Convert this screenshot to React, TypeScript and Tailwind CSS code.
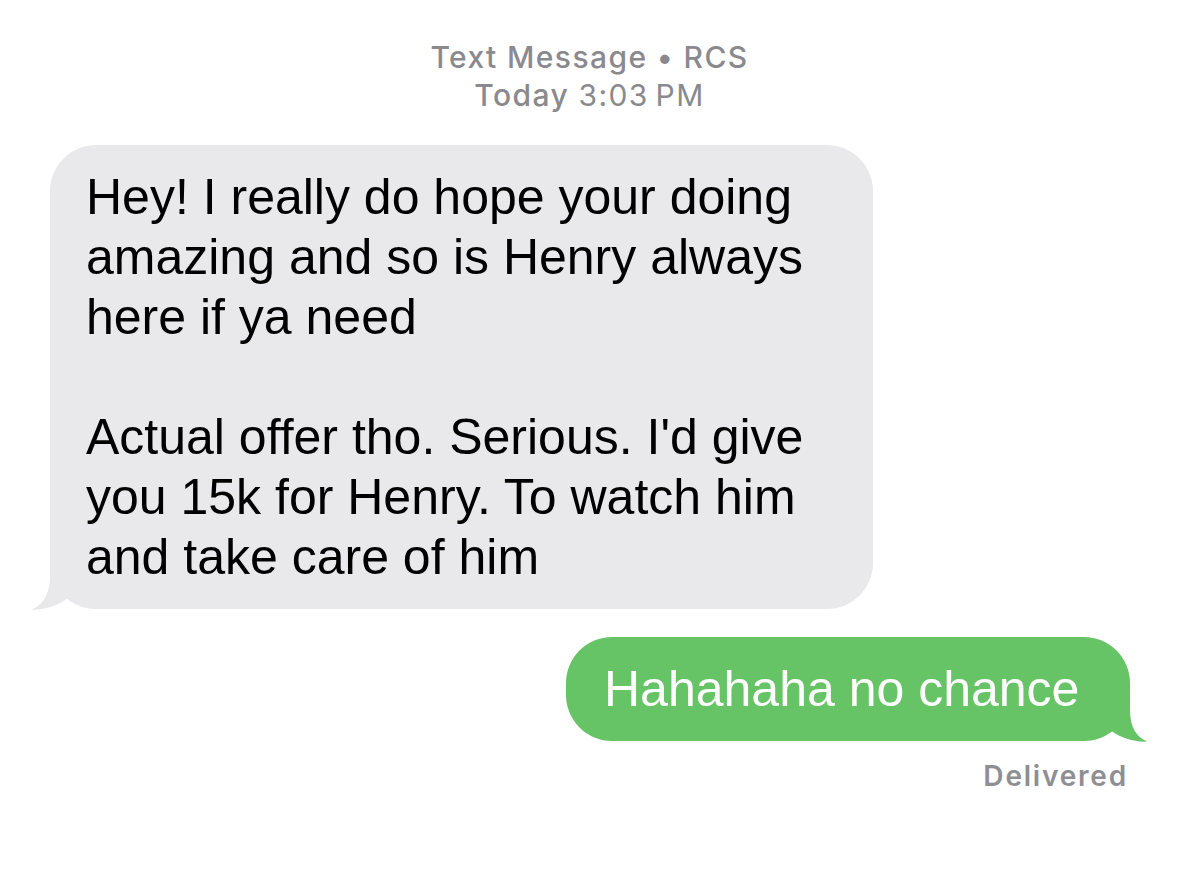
import React from "react";

const body = { fontFamily: '"Liberation Sans", Arial, sans-serif' };
const small = { fontFamily: 'Inter, "Liberation Sans", sans-serif' };

export default function App() {
  const grayLines = [
    "Hey! I really do hope your doing",
    "amazing and so is Henry always",
    "here if ya need",
    "\u00a0",
    "Actual offer tho. Serious. I'd give",
    "you 15k for Henry. To watch him",
    "and take care of him",
  ];
  return (
    <div className="w-[1179px] h-[871px] bg-white overflow-hidden flex flex-col">
      <div
        className="pt-[38px] flex flex-col items-center text-[30px] leading-[38px] font-medium text-[#8a8a8e] tracking-[1.4px]"
        style={small}
      >
        <div>Text Message • RCS</div>
        <div>
          Today <span className="font-normal">3:03&#8201;PM</span>
        </div>
      </div>

      <div className="mt-[31px] pl-[50px] flex">
        <div className="relative w-[823px] bg-[#e9e9eb] rounded-[46px] pl-[36px] pt-[22px] pb-[22px]">
          <svg
            className="absolute left-[-20px] bottom-[-2px]"
            width="40"
            height="50"
            viewBox="-20 -48 40 50"
          >
            <path
              d="M 0 -46 L 0 -32 C 0 -15 -8 -3 -18.5 0.5 C -8 1.5 8 -3 17 -10.5 L 20 -20 Z"
              fill="#e9e9eb"
            />
          </svg>
          <div className="relative text-[50px] leading-[60px] text-black" style={body}>
            {grayLines.map((l, i) => (
              <div key={i} className="whitespace-nowrap">
                {l}
              </div>
            ))}
          </div>
        </div>
      </div>

      <div className="mt-[28px] pr-[49px] flex justify-end">
        <div className="relative w-[564px] bg-[#66c466] rounded-[46px] pl-[38px] pt-[22px] pb-[22px]">
          <svg
            className="absolute right-[-20px] bottom-[-2px]"
            width="40"
            height="50"
            viewBox="-20 -48 40 50"
          >
            <path
              d="M 0 -46 L 0 -30 C 0 -14 7 -3 17.5 0.5 C 6 1.5 -9 -3 -18 -9.7 L -20 -20 Z"
              fill="#66c466"
            />
          </svg>
          <div className="relative text-[50px] leading-[60px] text-white whitespace-nowrap" style={body}>
            Hahahaha no chance
          </div>
        </div>
      </div>

      <div className="mt-[19px] pr-[51px] flex justify-end">
        <div
          className="text-[28px] leading-[32px] font-semibold text-[#8e8e93] tracking-[1.8px]"
          style={small}
        >
          Delivered
        </div>
      </div>
    </div>
  );
}
